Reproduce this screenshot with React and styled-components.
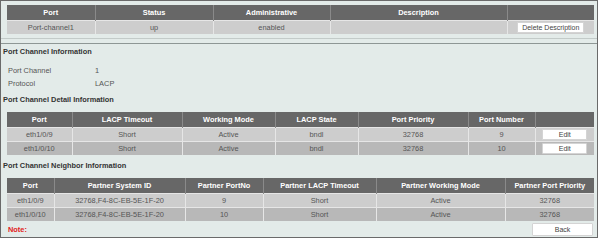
import React from 'react';
import styled, { createGlobalStyle } from 'styled-components';

const GlobalStyle = createGlobalStyle`
  body {
    margin: 0;
    background: #ffffff;
    font-family: "Liberation Sans", Arial, sans-serif;
  }
`;

const summary = {
  columns: [
    { label: 'Port', width: 88 },
    { label: 'Status', width: 118 },
    { label: 'Administrative', width: 117 },
    { label: 'Description', width: 177 },
    { label: '', width: 87 },
  ],
  rows: [['Port-channel1', 'up', 'enabled', '']],
};

const detail = {
  columns: [
    { label: 'Port', width: 65 },
    { label: 'LACP Timeout', width: 110 },
    { label: 'Working Mode', width: 93 },
    { label: 'LACP State', width: 83 },
    { label: 'Port Priority', width: 110 },
    { label: 'Port Number', width: 67 },
    { label: '', width: 59 },
  ],
  rows: [
    ['eth1/0/9', 'Short', 'Active', 'bndl', '32768', '9'],
    ['eth1/0/10', 'Short', 'Active', 'bndl', '32768', '10'],
  ],
};

const neighbor = {
  columns: [
    { label: 'Port', width: 47 },
    { label: 'Partner System ID', width: 131 },
    { label: 'Partner PortNo', width: 78 },
    { label: 'Partner LACP Timeout', width: 113 },
    { label: 'Partner Working Mode', width: 129 },
    { label: 'Partner Port Priority', width: 89 },
  ],
  rows: [
    ['eth1/0/9', '32768,F4-8C-EB-5E-1F-20', '9', 'Short', 'Active', '32768'],
    ['eth1/0/10', '32768,F4-8C-EB-5E-1F-20', '10', 'Short', 'Active', '32768'],
  ],
};

const DataTable = ({ config, action, actionWidth }) => (
  <Table>
    <colgroup>
      {config.columns.map((col, i) => (
        <col key={i} style={{ width: col.width }} />
      ))}
    </colgroup>
    <thead>
      <tr>
        {config.columns.map((col, i) => (
          <Th key={i}>{col.label}</Th>
        ))}
      </tr>
    </thead>
    <tbody>
      {config.rows.map((row, r) => (
        <Tr key={r} $odd={r % 2 === 1}>
          {row.map((cell, c) => (
            <Td key={c}>{cell}</Td>
          ))}
          {action && (
            <Td>
              <Button $w={actionWidth}>{action}</Button>
            </Td>
          )}
        </Tr>
      ))}
    </tbody>
  </Table>
);

const App = () => {
  return (
    <>
      <GlobalStyle />
      <Frame>
        <TopSection>
          <DataTable config={summary} action="Delete Description" actionWidth={67} />
        </TopSection>
        <Divider />
        <SectionTitle>Port Channel Information</SectionTitle>
        <InfoList>
          <InfoRow>
            <InfoLabel>Port Channel</InfoLabel>
            <span>1</span>
          </InfoRow>
          <InfoRow>
            <InfoLabel>Protocol</InfoLabel>
            <span>LACP</span>
          </InfoRow>
        </InfoList>
        <SectionTitle $gap={2}>Port Channel Detail Information</SectionTitle>
        <TableWrap>
          <DataTable config={detail} action="Edit" actionWidth={45} />
        </TableWrap>
        <SectionTitle $gap={3}>Port Channel Neighbor Information</SectionTitle>
        <TableWrap>
          <DataTable config={neighbor} />
        </TableWrap>
        <Footer>
          <Note>Note:</Note>
          <Button $w={61} $h={13}>Back</Button>
        </Footer>
      </Frame>
    </>
  );
};

export default App;

const Frame = styled.div`
  box-sizing: border-box;
  width: 598px;
  height: 238px;
  border: 1px solid #6a6a6a;
  background: #e3ebe9;
  display: flex;
  flex-direction: column;
  font-size: 7.4px;
  color: #555555;
`;

const TopSection = styled.div`
  padding: 4px 2px 4px 6px;
  border-bottom: 1px solid #c3cbc9;
`;

const Divider = styled.div`
  margin-top: 4px;
  height: 1px;
  background: #8e9795;
`;

const SectionTitle = styled.div`
  margin-top: ${(p) => p.$gap || 0}px;
  padding: 2px 0 0 2px;
  line-height: 11px;
  font-weight: bold;
  color: #333333;
`;

const InfoList = styled.div`
  margin-top: 7px;
  padding-left: 7px;
  display: flex;
  flex-direction: column;
`;

const InfoRow = styled.div`
  display: flex;
  height: 13px;
  align-items: center;
  color: #555555;
`;

const InfoLabel = styled.span`
  width: 87px;
`;

const TableWrap = styled.div`
  margin-top: 7px;
  padding: 0 2px 0 6px;
`;

const Table = styled.table`
  width: 587px;
  table-layout: fixed;
  border-collapse: collapse;
  font-size: 7.4px;
`;

const Th = styled.th`
  height: 15px;
  padding: 0;
  background: #676767;
  color: #ffffff;
  font-weight: bold;
  text-align: center;
  border-left: 1px solid #8a8a8a;
  &:first-child {
    border-left: none;
  }
`;

const Tr = styled.tr`
  background: ${(p) => (p.$odd ? '#b8b8b8' : '#cdcdcd')};
`;

const Td = styled.td`
  height: 13px;
  padding: 0;
  text-align: center;
  color: #555555;
  border-left: 1px solid #e6e6e6;
  border-top: 1px solid #e6e6e6;
  &:first-child {
    border-left: none;
  }
`;

const Button = styled.button`
  box-sizing: border-box;
  width: ${(p) => p.$w}px;
  height: ${(p) => p.$h || 11}px;
  padding: 0;
  margin: 0 auto;
  display: block;
  background: #ffffff;
  border: 1px solid #d4d4d4;
  border-radius: 1px;
  font-family: "Liberation Sans", Arial, sans-serif;
  font-size: 7px;
  color: #444444;
  white-space: nowrap;
  overflow: hidden;
`;

const Footer = styled.div`
  margin-top: 2px;
  padding: 0 4px 0 6px;
  display: flex;
  align-items: center;
  justify-content: space-between;
  & > button {
    margin: 0;
  }
`;

const Note = styled.span`
  color: #e21a1a;
  font-weight: bold;
  padding-left: 1px;
`;
